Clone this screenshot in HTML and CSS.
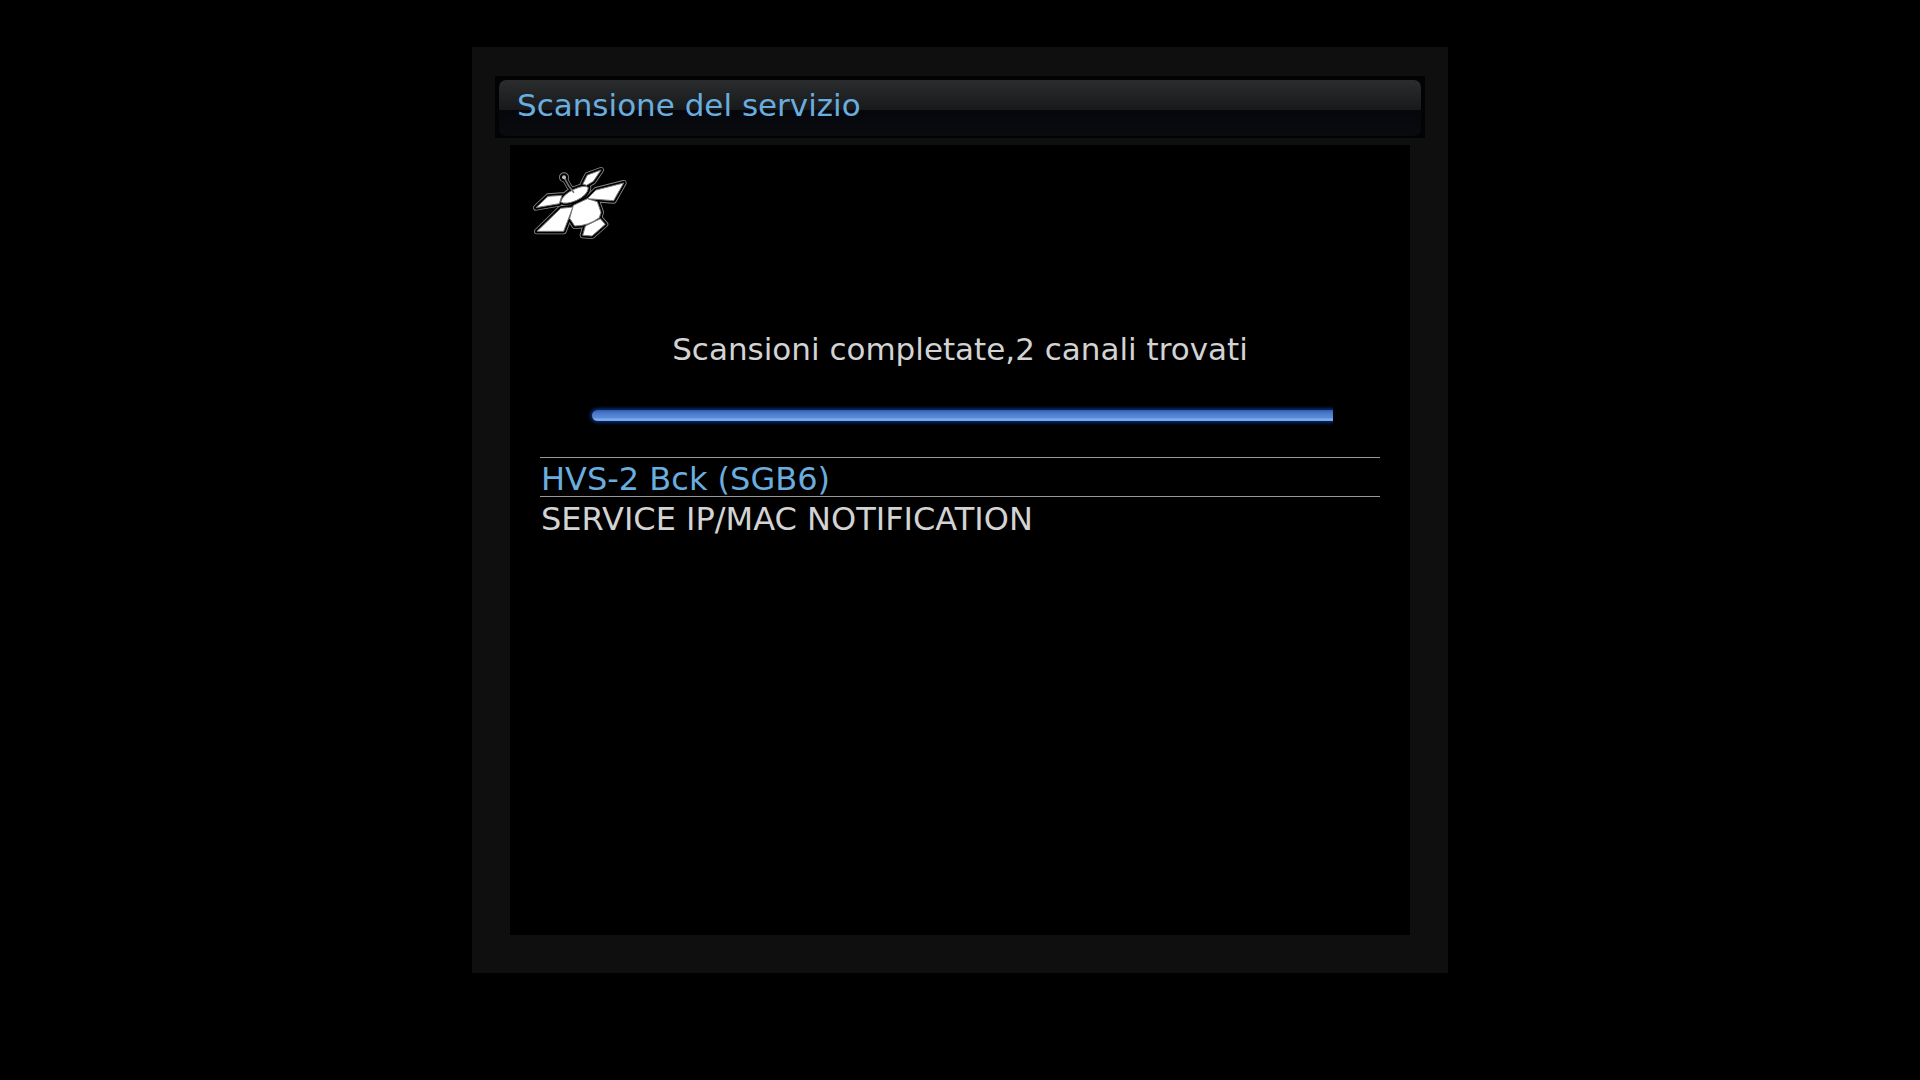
FILE: index.html
```html
<!DOCTYPE html>
<html lang="it">
<head>
    <meta charset="utf-8">
    <title>Scansione del servizio</title>
    <link rel="stylesheet" href="styles.css">
</head>
<body>
    <main class="window">
        <header class="title-bar">
            <h1>Scansione del servizio</h1>
        </header>
        <section class="content">
            <svg class="satellite" viewBox="0 0 360 285" aria-hidden="true">
                <defs>
                    <g id="sat">
                        <path d="M188 88 L202 60 L243 45 L220 79 L200 91 Z"/>
                        <path d="M202 131 L228 105 L311 84 L281 137 Z"/>
                        <path d="M48 158 L84 124 L126 121 L118 146 Z"/>
                        <path d="M51 229 L122 160 L159 156 L131 229 Z"/>
                        <path d="M188 241 L196 213 L241 191 L256 208 L216 243 Z"/>
                        <path d="M160 151 L202 131 L232 140 L243 172 L238 188 Q206 213 164 213 L149 190 Z"/>
                        <path d="M122 141 Q128 119 162 103 Q195 88 205 98 Q204 119 170 136 Q137 150 122 141 Z"/>
                    </g>
                    <path id="mast" d="M132 67 L147 94 L162 113"/>
                </defs>
                <g class="halo">
                    <use href="#sat"/>
                    <use href="#mast"/>
                    <circle cx="132" cy="67" r="6"/>
                </g>
                <g class="gap">
                    <use href="#sat"/>
                    <use href="#mast"/>
                    <circle cx="132" cy="67" r="6"/>
                </g>
                <use class="body" href="#sat"/>
                <use class="mast" href="#mast"/>
                <circle class="tip" cx="132" cy="67" r="6"/>
            </svg>
            <label class="status" for="scan">Scansioni completate,2 canali trovati</label>
            <progress class="scan" id="scan" value="100" max="100"></progress>
            <ul class="services" role="listbox" aria-label="Canali trovati">
                <li class="selected" role="option" aria-selected="true">HVS-2 Bck (SGB6)</li>
                <li role="option" aria-selected="false">SERVICE IP/MAC NOTIFICATION</li>
            </ul>
        </section>
    </main>
</body>
</html>
```
FILE: styles.css
```css
* {
    box-sizing: border-box;
}
body {
    display: grid;
    grid-template-columns: 59fr 122fr 59fr;
    min-height: 100vh;
    margin: 0;
    padding: 47px 0 107px;
    background: #000;
    color: #d3d3d3;
    font-family: "DejaVu Sans", Verdana, sans-serif;
    font-size: 31px;
    line-height: 39px;
}
.window {
    grid-column: 2;
    display: flex;
    flex-direction: column;
    padding: 29px 23px 38px;
    background: #0f0f0f;
}
.title-bar {
    height: 62px;
    padding: 4px 4px 2px;
    background: #020303;
}
.title-bar h1 {
    height: 56px;
    margin: 0;
    padding: 6px 18px;
    border-radius: 7px;
    background: linear-gradient(#2a2c2d, #17191b) 0 0 / 100% 30px no-repeat, linear-gradient(#06070c 30px, #090b0f);
    color: #6aaddf;
    font-size: inherit;
    font-weight: normal;
}
.content {
    flex: 1;
    display: flex;
    flex-direction: column;
    margin: 7px 15px 0;
    padding: 10px 30px;
    background: #000;
}
.satellite {
    width: 120px;
    height: 95px;
    margin-left: -20px;
}
.satellite .halo,
.satellite .gap {
    stroke-linejoin: round;
    stroke-linecap: round;
}
.satellite .halo {
    fill: #888;
    stroke: #888;
    stroke-width: 18;
}
.satellite .gap {
    fill: #000;
    stroke: #000;
    stroke-width: 13;
}
.satellite .body {
    fill: #fff;
    stroke: #777;
    stroke-width: 3;
}
.satellite .mast {
    fill: none;
    stroke: #777;
    stroke-width: 5;
}
.satellite .tip {
    fill: #bbb;
}
.status {
    margin-top: 80px;
    text-align: center;
}
.scan {
    appearance: none;
    width: auto;
    height: 11px;
    margin: 41px 47px 36px 52px;
    border: 0;
    border-radius: 6px 0 0 6px;
    background: none;
    box-shadow: 0 0 3px 2px #06286c;
    /* the glow is cut off where the bar ends */
    clip-path: inset(-6px 0 -6px -6px);
}
.scan::-webkit-progress-bar {
    background: none;
}
.scan::-webkit-progress-value {
    border-radius: 6px 0 0 6px;
    background: linear-gradient(#2f5cb0, #4878c8 3px, #5c8cd8 8px, #82b0f0 9px, #6f9fe4);
}
.services {
    margin: 0;
    padding: 0;
    list-style: none;
    font-size: 32px;
}
.services li {
    height: 40px;
    padding: 2px 0 0 1px;
    border: 1px solid transparent;
    border-width: 1px 0;
}
.services .selected {
    border-color: #999;
    color: #6aaddf;
}
```
